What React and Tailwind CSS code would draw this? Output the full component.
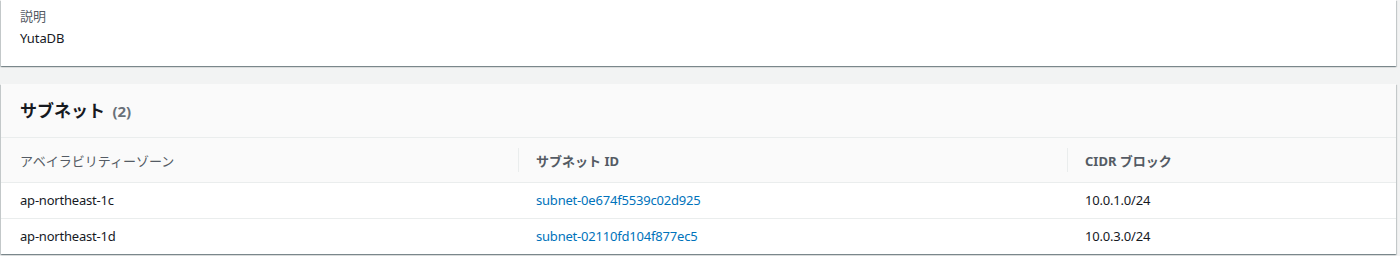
const subnets = [
  { az: 'ap-northeast-1c', id: 'subnet-0e674f5539c02d925', cidr: '10.0.1.0/24' },
  { az: 'ap-northeast-1d', id: 'subnet-02110fd104f877ec5', cidr: '10.0.3.0/24' },
]

const cardShadow =
  'shadow-[0_1px_1px_0_rgba(0,28,36,0.3),1px_1px_1px_0_rgba(0,28,36,0.15),-1px_1px_1px_0_rgba(0,28,36,0.15)]'

export default function App() {
  return (
    <div className="w-[1400px] h-[256px] bg-[#f2f3f3] overflow-hidden font-['Noto_Sans','Noto_Sans_CJK_JP',sans-serif]">
      <div className="pl-px pr-[4px]">
        {/* description card */}
        <div className={`bg-white ${cardShadow} h-[66px] px-[19px] pt-[6px]`}>
          <div className="text-[13px] leading-[20px] text-[#545b64]">説明</div>
          <div className="text-[13px] leading-[20px] mt-[2px] text-[#16191f] tracking-[-0.1px]">YutaDB</div>
        </div>

        {/* subnets card */}
        <div className={`mt-[18px] bg-white ${cardShadow}`}>
          <div className="bg-[#fafafa] h-[54px] px-[19px] flex items-center border-b border-[#eaeded]">
            <h2 className="text-[17px] font-bold text-[#16191f] leading-none">
              サブネット <span className="ml-[3px] text-[#687078] font-bold text-[15px]">(2)</span>
            </h2>
          </div>
          <table className="w-full border-collapse text-[13px] tracking-[-0.2px]">
            <colgroup>
              <col className="w-[517px]" />
              <col className="w-[549px]" />
              <col />
            </colgroup>
            <thead>
              <tr className="bg-[#fafafa] h-[44px] border-b border-[#eaeded] text-[#545b64]">
                <th className="text-left font-normal pl-[19px] pt-[3px] tracking-normal">アベイラビリティーゾーン</th>
                <th className="text-left font-bold pl-[18px] pt-[3px] relative tracking-normal">
                  <span className="absolute left-0 top-[10px] h-[24px] w-px bg-[#eaeded]" />
                  サブネット ID
                </th>
                <th className="text-left font-bold pl-[18px] pt-[3px] relative tracking-normal">
                  <span className="absolute left-0 top-[10px] h-[24px] w-px bg-[#eaeded]" />
                  CIDR ブロック
                </th>
              </tr>
            </thead>
            <tbody>
              {subnets.map((s, i) => (
                <tr key={s.id} className={`h-[36px] ${i === 0 ? 'border-b border-[#eaeded]' : ''}`}>
                  <td className="pl-[19px] pt-px text-[#16191f]">{s.az}</td>
                  <td className="pl-[18px] pt-px text-[#0073bb]">{s.id}</td>
                  <td className="pl-[18px] pt-px text-[#16191f]">{s.cidr}</td>
                </tr>
              ))}
            </tbody>
          </table>
        </div>
      </div>
    </div>
  )
}
